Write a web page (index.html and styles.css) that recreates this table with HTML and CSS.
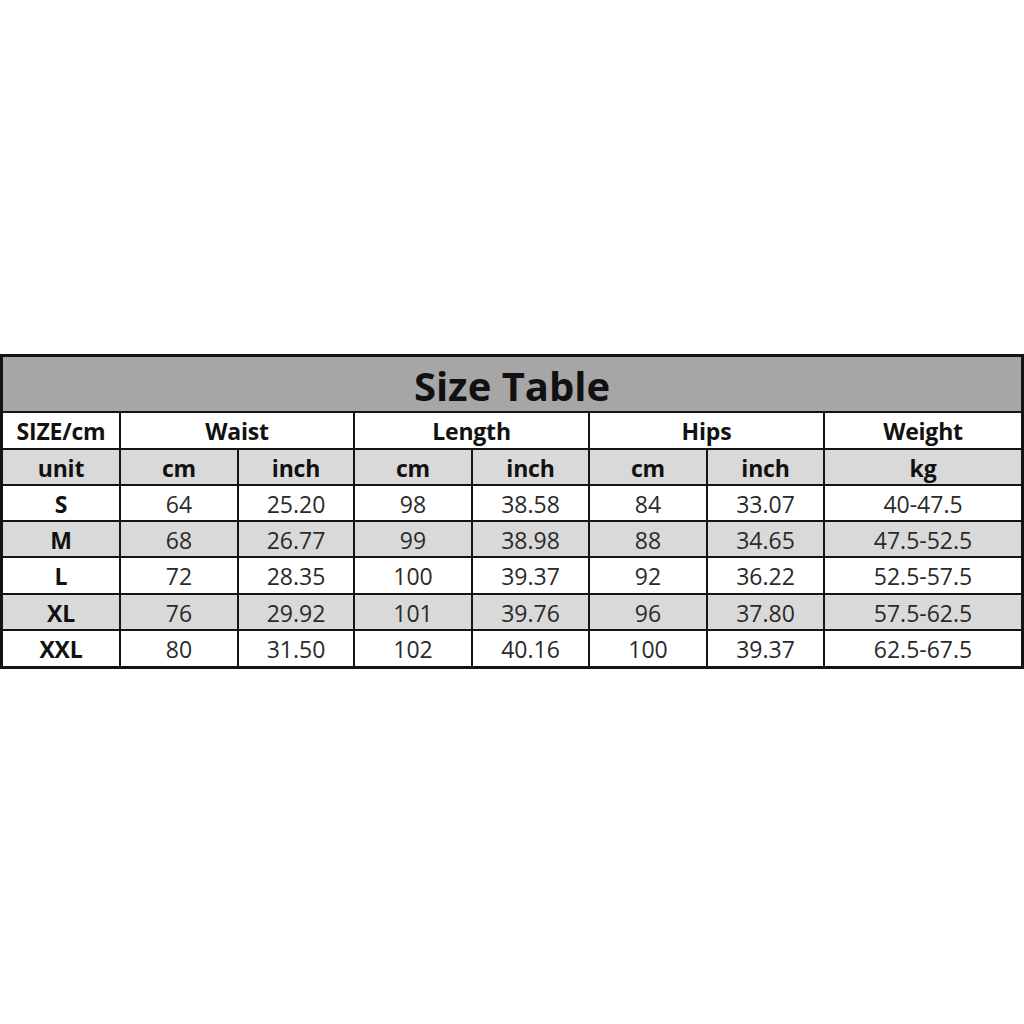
FILE: index.html
```html
<!DOCTYPE html>
<html>
<head>
<meta charset="utf-8">
<link rel="stylesheet" href="styles.css">
</head>
<body>
<div class="page">
  <div class="size-table">
    <div class="cell title">Size Table</div>

    <div class="cell head">SIZE/cm</div>
    <div class="cell head span2">Waist</div>
    <div class="cell head span2">Length</div>
    <div class="cell head span2">Hips</div>
    <div class="cell head">Weight</div>

    <div class="cell head shade">unit</div>
    <div class="cell head shade">cm</div>
    <div class="cell head shade">inch</div>
    <div class="cell head shade">cm</div>
    <div class="cell head shade">inch</div>
    <div class="cell head shade">cm</div>
    <div class="cell head shade">inch</div>
    <div class="cell head shade">kg</div>

    <div class="cell head">S</div>
    <div class="cell">64</div>
    <div class="cell">25.20</div>
    <div class="cell">98</div>
    <div class="cell">38.58</div>
    <div class="cell">84</div>
    <div class="cell">33.07</div>
    <div class="cell">40-47.5</div>

    <div class="cell head shade">M</div>
    <div class="cell shade">68</div>
    <div class="cell shade">26.77</div>
    <div class="cell shade">99</div>
    <div class="cell shade">38.98</div>
    <div class="cell shade">88</div>
    <div class="cell shade">34.65</div>
    <div class="cell shade">47.5-52.5</div>

    <div class="cell head">L</div>
    <div class="cell">72</div>
    <div class="cell">28.35</div>
    <div class="cell">100</div>
    <div class="cell">39.37</div>
    <div class="cell">92</div>
    <div class="cell">36.22</div>
    <div class="cell">52.5-57.5</div>

    <div class="cell head shade">XL</div>
    <div class="cell shade">76</div>
    <div class="cell shade">29.92</div>
    <div class="cell shade">101</div>
    <div class="cell shade">39.76</div>
    <div class="cell shade">96</div>
    <div class="cell shade">37.80</div>
    <div class="cell shade">57.5-62.5</div>

    <div class="cell head">XXL</div>
    <div class="cell">80</div>
    <div class="cell">31.50</div>
    <div class="cell">102</div>
    <div class="cell">40.16</div>
    <div class="cell">100</div>
    <div class="cell">39.37</div>
    <div class="cell">62.5-67.5</div>
  </div>
</div>
</body>
</html>
```

FILE: styles.css
```css
html, body {
  margin: 0;
  padding: 0;
  background: #ffffff;
}

.page {
  width: 1024px;
  height: 1024px;
  display: flex;
  flex-direction: column;
  justify-content: flex-start;
  padding-top: 354px;
  box-sizing: border-box;
}

.size-table {
  display: grid;
  grid-template-columns: 116px 116px 114px 116px 115px 116px 115px 196px;
  grid-template-rows: 54px 35px 34px 34px 34px 35px 34px 35px;
  gap: 2px;
  background: #141414;
  border: 3px solid #141414;
  width: 1024px;
  box-sizing: border-box;
  font-family: "Open Sans", "Noto Sans", "Liberation Sans", sans-serif;
}

.cell {
  background: #ffffff;
  display: flex;
  align-items: center;
  justify-content: center;
  font-size: 23px;
  color: #2a2a2a;
  line-height: 1;
  padding-top: 2px;
  box-sizing: border-box;
}

.cell.shade {
  background: #d9d9d9;
}

.cell.head {
  font-weight: 700;
  color: #111111;
  font-size: 23px;
  letter-spacing: -0.2px;
}

.cell.span2 {
  grid-column: span 2;
}

.title {
  grid-column: 1 / -1;
  background: #a6a6a6;
  font-weight: 700;
  font-size: 40px;
  color: #111111;
  padding-top: 4px;
}
```
